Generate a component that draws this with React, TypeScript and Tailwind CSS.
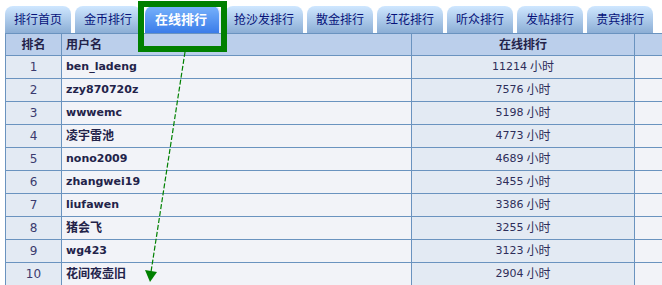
import React from 'react';

const tabs = [
  { label: '排行首页' },
  { label: '金币排行' },
  { label: '在线排行', active: true },
  { label: '抢沙发排行' },
  { label: '散金排行' },
  { label: '红花排行' },
  { label: '听众排行' },
  { label: '发帖排行' },
  { label: '贵宾排行' },
];

const rows = [
  { rank: 1, name: 'ben_ladeng', hours: 11214 },
  { rank: 2, name: 'zzy870720z', hours: 7576 },
  { rank: 3, name: 'wwwemc', hours: 5198 },
  { rank: 4, name: '凌宇雷池', hours: 4773 },
  { rank: 5, name: 'nono2009', hours: 4689 },
  { rank: 6, name: 'zhangwei19', hours: 3455 },
  { rank: 7, name: 'liufawen', hours: 3386 },
  { rank: 8, name: '猪会飞', hours: 3255 },
  { rank: 9, name: 'wg423', hours: 3123 },
  { rank: 10, name: '花间夜壶旧', hours: 2904 },
];

const isCjk = (s: string) => /[\u4e00-\u9fff]/.test(s);

export default function App() {
  return (
    <div
      className="relative w-[662px] h-[285px] overflow-hidden bg-white text-[11px]"
      style={{ fontFamily: '"DejaVu Sans", "Noto Sans CJK SC", sans-serif' }}
    >
      {/* tabs */}
      <div className="flex gap-[4px] pl-[5px] pt-[6px]">
        {tabs.map((tab) =>
          tab.active ? (
            <div
              key={tab.label}
              className="h-[27px] pl-[10px] pr-[12px] flex items-center rounded-t-[8px] bg-gradient-to-b from-[#78b2fb] to-[#3a7ce9] border-r-2 border-[#dfeaff] text-white font-bold text-[13px]"
            >
              {tab.label}
            </div>
          ) : (
            <div
              key={tab.label}
              className="h-[27px] px-[9px] flex items-center rounded-t-[8px] bg-gradient-to-b from-[#cfe7ff] to-[#8caed5] text-[#06127a] text-[12px]"
            >
              {tab.label}
            </div>
          )
        )}
      </div>

      {/* table */}
      <div className="ml-[5px] w-[700px] border-l border-t border-[#6a93bf] text-[#2e2e5a]">
        <div className="grid grid-cols-[56px_350px_223px_1fr] h-[22px] border-b border-[#6a93bf] bg-[#bbcfeb] font-bold text-[12px] text-[#23234a]">
          <div className="border-r border-[#6a93bf] flex items-center justify-center">排名</div>
          <div className="border-r border-[#6a93bf] flex items-center pl-[4px]">用户名</div>
          <div className="border-r border-[#6a93bf] flex items-center justify-center">在线排行</div>
          <div />
        </div>
        {rows.map((r) => (
          <div
            key={r.rank}
            className="grid grid-cols-[56px_350px_223px_1fr] h-[23px] border-b border-[#6a93bf]"
          >
            <div className="border-r border-[#6a93bf] bg-[#e3eaf3] flex items-center justify-center text-[12px] text-[#3a3a6e]">
              {r.rank}
            </div>
            <div
              className={
                isCjk(r.name)
                  ? 'border-r border-[#6a93bf] bg-[#f2f3f8] flex items-center pl-[4px] font-bold text-[12px] text-[#23234a]'
                  : 'border-r border-[#6a93bf] bg-[#f2f3f8] flex items-center pl-[4px] font-bold text-[#23234a]'
              }
            >
              {r.name}
            </div>
            <div className="border-r border-[#6a93bf] bg-[#e3eaf3] flex items-center justify-center">
              {r.hours} <span className="ml-[3px] text-[12px]">小时</span>
            </div>
            <div className="bg-[#f2f3f8]" />
          </div>
        ))}
      </div>

      {/* annotation overlay */}
      <svg
        className="absolute left-0 top-0 pointer-events-none"
        width={662}
        height={285}
        viewBox="0 0 662 285"
      >
        <rect x={141} y={4} width={83} height={45} fill="none" stroke="#008000" strokeWidth={6} />
        <line
          x1={185}
          y1={52}
          x2={151}
          y2={272}
          stroke="#008000"
          strokeWidth={1.2}
          strokeDasharray="5 2"
        />
        <polygon points="145,270 157,272 150,282" fill="#008000" />
      </svg>
    </div>
  );
}
